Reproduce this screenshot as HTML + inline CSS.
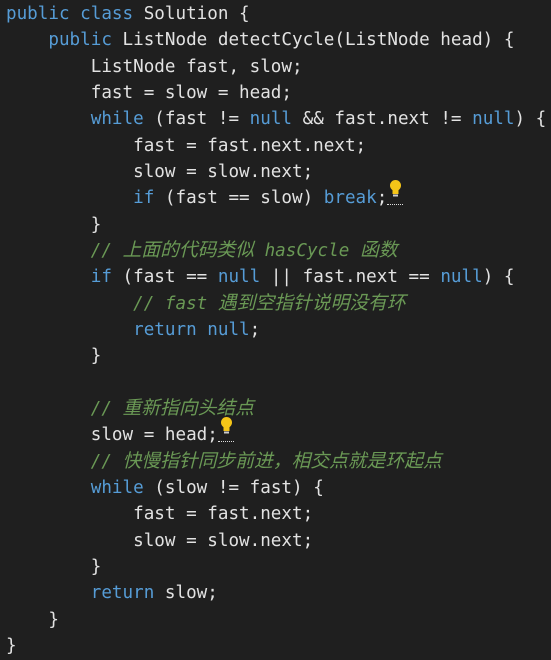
<!DOCTYPE html>
<html><head><meta charset="utf-8"><style>
html,body{margin:0;padding:0;background:#1f1f1f;width:551px;height:660px;overflow:hidden}
pre{margin:0;position:absolute;left:6px;top:1px;font-family:"DejaVu Sans Mono","Noto Sans CJK SC",monospace;font-size:17.6px;line-height:26.33px;color:#e2e2e2}
.k{color:#569cd6}.c{color:#6a9955;font-style:italic}
.z{font-size:18.8px;font-family:"Noto Sans CJK SC",sans-serif;line-height:0}
.b{display:inline-block;position:relative;width:16px;height:18px;vertical-align:-2px;border-bottom:1px dotted #ddd}
.b svg{position:absolute;left:2px;top:-7px}
</style></head><body><pre><span class="k">public</span> <span class="k">class</span> Solution {
    <span class="k">public</span> ListNode detectCycle(ListNode head) {
        ListNode fast, slow;
        fast = slow = head;
        <span class="k">while</span> (fast != <span class="k">null</span> &amp;&amp; fast.next != <span class="k">null</span>) {
            fast = fast.next.next;
            slow = slow.next;
            <span class="k">if</span> (fast == slow) <span class="k">break</span>;<span class="b"><svg width="13" height="20" viewBox="0 0 13 20"><circle cx="6.5" cy="6.5" r="5.5" fill="#f5c518"/><rect x="3.5" y="10" width="6" height="5" fill="#f5c518"/><rect x="4" y="15.5" width="5" height="2" fill="#ccc"/></svg></span>
        }
        <span class="c">// <span class="z">上面的代码类似</span> hasCycle <span class="z">函数</span></span>
        <span class="k">if</span> (fast == <span class="k">null</span> || fast.next == <span class="k">null</span>) {
            <span class="c">// fast <span class="z">遇到空指针说明没有环</span></span>
            <span class="k">return</span> <span class="k">null</span>;
        }

        <span class="c">// <span class="z">重新指向头结点</span></span>
        slow = head;<span class="b"><svg width="13" height="20" viewBox="0 0 13 20"><circle cx="6.5" cy="6.5" r="5.5" fill="#f5c518"/><rect x="3.5" y="10" width="6" height="5" fill="#f5c518"/><rect x="4" y="15.5" width="5" height="2" fill="#ccc"/></svg></span>
        <span class="c">// <span class="z">快慢指针同步前进，相交点就是环起点</span></span>
        <span class="k">while</span> (slow != fast) {
            fast = fast.next;
            slow = slow.next;
        }
        <span class="k">return</span> slow;
    }
}</pre></body></html>
